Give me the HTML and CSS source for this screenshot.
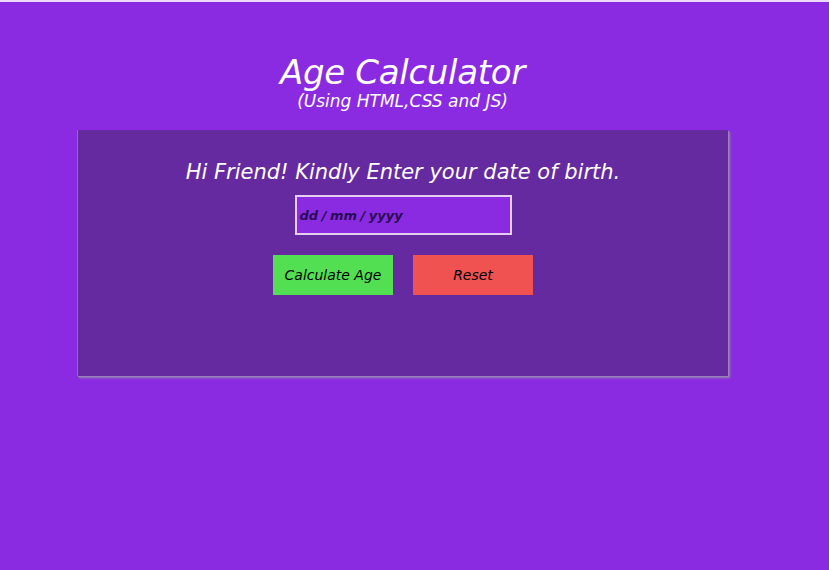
FILE: index.html
```html
<!DOCTYPE html>
<html>
<head>
<meta charset="utf-8">
<link rel="stylesheet" href="styles.css">
</head>
<body>
<div class="topbar"></div>
<div class="wrap">
  <header class="head">
    <h1 class="title">Age Calculator</h1>
    <p class="sub">(Using HTML,CSS and JS)</p>
  </header>
  <section class="card">
    <p class="prompt">Hi Friend! Kindly Enter your date of birth.</p>
    <div class="field">dd / mm / yyyy</div>
    <div class="actions">
      <button class="btn btn-calc">Calculate Age</button>
      <button class="btn btn-reset">Reset</button>
    </div>
  </section>
</div>
</body>
</html>
```

FILE: styles.css
```css
html, body {
  margin: 0;
  padding: 0;
  height: 100%;
}
body {
  background: #8a2be2;
  font-family: "DejaVu Sans", "Noto Sans", sans-serif;
  font-style: italic;
  color: #fff;
}
.topbar {
  height: 2px;
  background: #eadcf8;
}
.wrap {
  width: 651px;
  margin-left: 77px;
}
.head {
  text-align: center;
  padding-top: 51px;
}
.title {
  margin: 0;
  font-size: 34px;
  font-weight: 400;
  line-height: 38px;
  letter-spacing: -0.3px;
}
.sub {
  margin: 0;
  font-size: 17px;
  line-height: 20px;
}
.card {
  margin-top: 19px;
  height: 246px;
  background: #652a9f;
  box-shadow: 1px 1px 0 #9e7fc0, 2px 2px 2px #8d8aa0;
  border-left: 1px solid #8d6cc0;
  display: flex;
  flex-direction: column;
  align-items: center;
  box-sizing: border-box;
  padding-top: 28px;
}
.prompt {
  margin: 0;
  font-size: 21px;
  line-height: 28px;
}
.field {
  margin-top: 9px;
  width: 217px;
  height: 40px;
  box-sizing: border-box;
  border: 2px solid #e6cdf2;
  background: #8a2be2;
  color: #2a0a55;
  font-size: 13px;
  font-weight: 600;
  display: flex;
  align-items: center;
  padding-left: 3px;
  word-spacing: -1px;
}
.actions {
  margin-top: 20px;
  display: flex;
  gap: 20px;
}
.btn {
  width: 120px;
  height: 40px;
  border: none;
  font-family: inherit;
  font-style: italic;
  font-weight: 400;
  font-size: 14px;
  color: #000;
  padding: 0;
}
.btn-calc { background: #52e052; }
.btn-reset { background: #f05252; }
```
